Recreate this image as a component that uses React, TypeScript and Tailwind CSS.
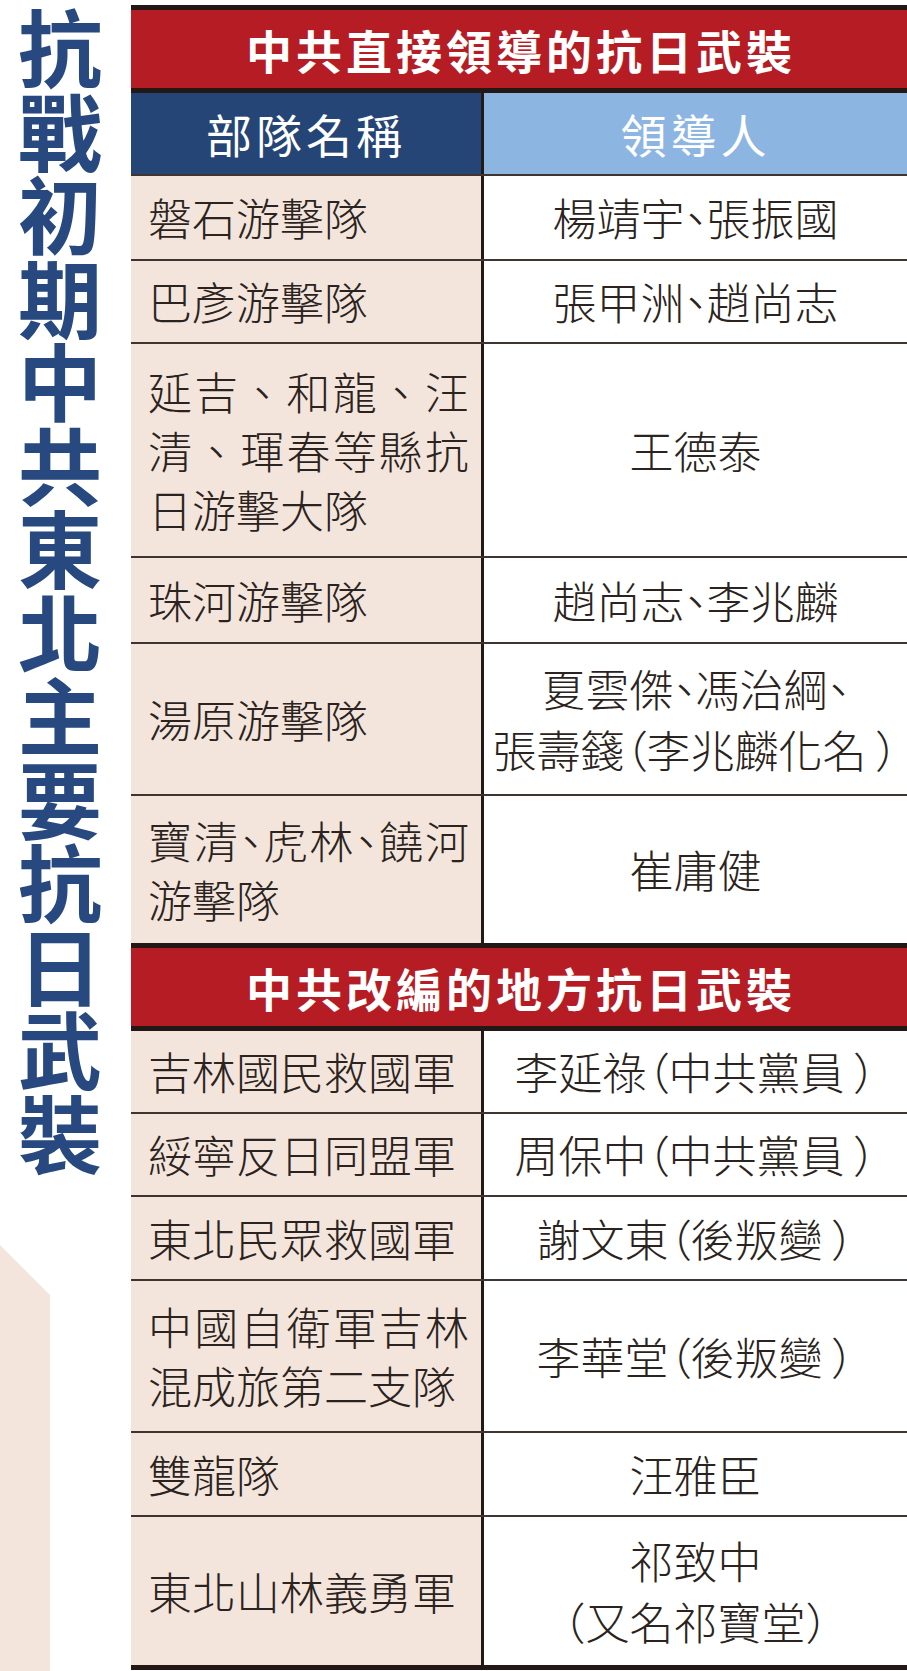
import React from "react";

type Row = {
  left: string[];
  right: string[];
  h: string;
  justifyLeft?: boolean;
  first?: boolean;
};

const section1: Row[] = [
  { left: ["磐石游擊隊"], right: ["楊靖宇、張振國"], h: "h-[85px]" },
  { left: ["巴彥游擊隊"], right: ["張甲洲、趙尚志"], h: "h-[83px]" },
  {
    left: ["延吉、和龍、汪", "清、琿春等縣抗", "日游擊大隊"],
    right: ["王德泰"],
    h: "h-[214px]",
    justifyLeft: true,
  },
  { left: ["珠河游擊隊"], right: ["趙尚志、李兆麟"], h: "h-[86px]" },
  {
    left: ["湯原游擊隊"],
    right: ["夏雲傑、馮治綱、", "張壽籛（李兆麟化名）"],
    h: "h-[152px]",
  },
  {
    left: ["寶清、虎林、饒河", "游擊隊"],
    right: ["崔庸健"],
    h: "h-[149px]",
    justifyLeft: true,
  },
];

const section2: Row[] = [
  { left: ["吉林國民救國軍"], right: ["李延祿（中共黨員）"], h: "h-[81px]", first: true },
  { left: ["綏寧反日同盟軍"], right: ["周保中（中共黨員）"], h: "h-[83px]" },
  { left: ["東北民眾救國軍"], right: ["謝文東（後叛變）"], h: "h-[84px]" },
  {
    left: ["中國自衛軍吉林", "混成旅第二支隊"],
    right: ["李華堂（後叛變）"],
    h: "h-[152px]",
    justifyLeft: true,
  },
  { left: ["雙龍隊"], right: ["汪雅臣"], h: "h-[84px]" },
  {
    left: ["東北山林義勇軍"],
    right: ["祁致中", "（又名祁寶堂）"],
    h: "h-[150px]",
  },
];

function Txt({ text, narrow }: { text: string; narrow: boolean }) {
  if (!narrow) return <>{text}</>;
  const chars = text.split("");
  return (
    <>
      {chars.map((c, i) => {
        if (c === "、" || (c === "（" && i > 0)) {
          return (
            <span key={i} className="[font-feature-settings:'palt']">
              {c}
            </span>
          );
        }
        if (c === "）" && text[0] !== "（") {
          return (
            <span key={i} className="pl-[10px] [font-feature-settings:'palt']">
              {c}
            </span>
          );
        }
        return <React.Fragment key={i}>{c}</React.Fragment>;
      })}
    </>
  );
}

function TableRow({ row }: { row: Row }) {
  const lastIdx = row.left.length - 1;
  const narrowLeft = row.left[0].startsWith("寶清");
  return (
    <div
      className={`flex min-w-0 ${row.h} ${row.first ? "" : "border-t-2 border-[#3e3531]"}`}
    >
      <div className="flex w-[350px] shrink-0 flex-col justify-center bg-[#f3e5dc] pl-[17px] pr-[12px] text-[44px] leading-[59px] font-light text-[#2a2320]">
        {row.left.map((l, i) => (
          <div
            key={i}
            className={
              row.justifyLeft && i < lastIdx
                ? "text-justify [text-align-last:justify] whitespace-nowrap"
                : "whitespace-nowrap"
            }
          >
            <Txt text={l} narrow={narrowLeft} />
          </div>
        ))}
      </div>
      <div className="w-[3px] shrink-0 bg-[#231a16]" />
      <div className="flex min-w-0 flex-1 flex-col items-center justify-center bg-white text-center text-[44px] leading-[61px] font-light text-[#2a2320]">
        {row.right.map((r, i) => (
          <div key={i} className="whitespace-nowrap">
            <Txt text={r} narrow={true} />
          </div>
        ))}
      </div>
    </div>
  );
}

function SectionHeader({ text }: { text: string }) {
  return (
    <div className="flex h-[88px] items-center justify-center border-y-[5px] border-[#231815] bg-[#b51c24] pl-[4px] text-[46px] font-bold tracking-[4px] text-white">
      {text}
    </div>
  );
}

const title = "抗戰初期中共東北主要抗日武裝".split("");

export default function App() {
  return (
    <div className="flex min-h-[1671px] w-[907px] overflow-hidden bg-white font-['Noto_Sans_CJK_TC','Noto_Sans',sans-serif]">
      <div className="flex w-[131px] shrink-0 flex-col">
        <div className="flex flex-col pl-[18px] pt-[3px]">
          {title.map((c, i) => (
            <div
              key={i}
              className="h-[83.5px] text-[84px] leading-[83.5px] font-bold text-[#27497f]"
            >
              {c}
            </div>
          ))}
        </div>
        <div className="mt-auto h-[426px] w-[50px] bg-[#f3e5dc] [clip-path:polygon(0_0,100%_50px,100%_100%,0_100%)]" />
      </div>

      <div className="flex w-[776px] min-w-0 shrink-0 flex-col pt-[5px]">
        <SectionHeader text="中共直接領導的抗日武裝" />
        <div className="flex h-[81px]">
          <div className="flex w-[350px] shrink-0 items-center justify-center bg-[#254577] text-[46px] tracking-[4px] text-white">
            部隊名稱
          </div>
          <div className="w-[3px] shrink-0 bg-[#231a16]" />
          <div className="flex min-w-0 flex-1 items-center justify-center bg-[#8db5e2] text-[46px] tracking-[4px] text-white">
            領導人
          </div>
        </div>
        {section1.map((r, i) => (
          <TableRow key={i} row={r} />
        ))}
        <SectionHeader text="中共改編的地方抗日武裝" />
        {section2.map((r, i) => (
          <TableRow key={i} row={r} />
        ))}
        <div className="h-[5px] bg-[#231815]" />
      </div>
    </div>
  );
}
